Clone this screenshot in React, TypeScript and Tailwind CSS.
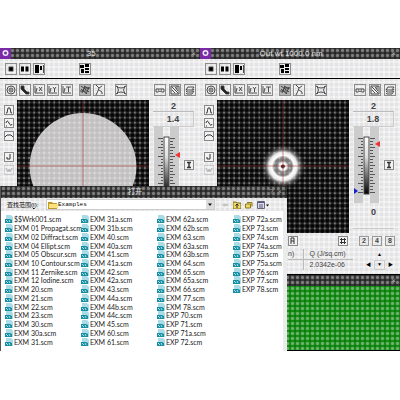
import type { ReactNode } from 'react';
import clsx from 'clsx';

const MESH =
  'bg-[radial-gradient(circle,rgba(255,255,255,0.3)_1px,transparent_2px),linear-gradient(90deg,transparent_1px,rgba(255,255,255,0.08)_1px,rgba(255,255,255,0.08)_4px,transparent_4px),linear-gradient(transparent_1px,rgba(255,255,255,0.08)_1px,rgba(255,255,255,0.08)_4px,transparent_4px)] bg-[length:5px_5px]';

const PANEL =
  'bg-[#e3e3e5] bg-[linear-gradient(90deg,transparent_3px,rgba(255,255,255,0.4)_3px),linear-gradient(transparent_3px,rgba(255,255,255,0.4)_3px)] bg-[length:5px_5px]';

const FILES = [
  [
    '$$Wrk001', 'EXM 01 Propagat', 'EXM 02 Diffract', 'EXM 04 Ellipt', 'EXM 05 Obscur',
    'EXM 10 Contour', 'EXM 11 Zernike', 'EXM 12 Iodine', 'EXM 20', 'EXM 21', 'EXM 22',
    'EXM 23', 'EXM 30', 'EXM 30a', 'EXM 31',
  ],
  [
    'EXM 31a', 'EXM 31b', 'EXM 40', 'EXM 40a', 'EXM 41', 'EXM 41a', 'EXM 42', 'EXM 42a',
    'EXM 43', 'EXM 44a', 'EXM 44b', 'EXM 44c', 'EXM 45', 'EXM 60', 'EXM 61',
  ],
  [
    'EXM 62a', 'EXM 62b', 'EXM 63', 'EXM 63a', 'EXM 63b', 'EXM 64', 'EXM 65', 'EXM 65a',
    'EXM 66', 'EXM 77', 'EXM 78', 'EXP 70', 'EXP 71', 'EXP 71a', 'EXP 72',
  ],
  ['EXP 72a', 'EXP 73', 'EXP 74', 'EXP 74a', 'EXP 75', 'EXP 75a', 'EXP 76', 'EXP 77', 'EXP 78'],
];

interface ToolProps {
  label: string;
  children: ReactNode;
  className?: string;
}

function Tool({ label, children, className }: ToolProps) {
  return (
    <button
      type="button"
      aria-label={label}
      className={clsx('size-3 shrink-0 border border-[#8c8c8c]', className)}
    >
      <svg viewBox="0 0 10 10" className="block size-full" fill="none" stroke="#3a3a3a" strokeWidth="0.900">
        {children}
      </svg>
    </button>
  );
}

function SmallTool({ label, children, className }: ToolProps) {
  return (
    <button
      type="button"
      aria-label={label}
      className={clsx('size-[10px] shrink-0 border border-[#888] bg-[#f2f2f2]', className)}
    >
      <svg viewBox="0 0 8 8" className="block size-full" fill="none" stroke="#333" strokeWidth="1">
        {children}
      </svg>
    </button>
  );
}

function TitleBar({ title, icon = true }: { title: string; icon?: boolean }) {
  return (
    <div className={clsx('flex h-[11px] items-center bg-[#262626] pr-1', MESH)}>
      {icon && (
        <svg viewBox="0 0 11 11" className="size-[11px] shrink-0">
          <rect width="11" height="11" fill="#7a2aa8" />
          <circle cx="5.500" cy="5" r="3" fill="#f2e6fa" />
          <circle cx="5.500" cy="5" r="1.500" fill="#6a3a9a" />
        </svg>
      )}
      <h2 className="flex-1 truncate pr-5 text-center text-[8px] leading-[11px] text-[#e4e4e4]">{title}</h2>
      <button type="button" aria-label="Close" className="text-[8px] leading-[11px] text-[#bbb]">
        ×
      </button>
    </div>
  );
}

function LayoutBar() {
  return (
    <div className="flex h-5 items-center gap-0.5 border-b border-black pl-[5px]">
      <Tool label="One pane">
        <rect x="3" y="3" width="4" height="4" fill="#000" />
      </Tool>
      <Tool label="Two panes">
        <path d="M1 2.500h3v5h-3zM5.500 2.500h3v5h-3z" fill="#000" stroke="none" />
      </Tool>
      <Tool label="Split pane">
        <path d="M1 1h4v8h-4zM6 2h2v4h-2z" fill="#000" stroke="none" />
        <path d="M9.500 1v8" />
      </Tool>
      <Tool label="Mosaic" className="ml-8">
        <path d="M0 1h4v3h-4zM5 0h4v3h-4zM1 5h3v4h-3zM5 4h4v2h-4zM5 7h4v2h-4z" fill="#000" stroke="none" />
      </Tool>
    </div>
  );
}

function AnalysisBar() {
  return (
    <div className="flex h-[21px] items-center gap-0.5 pt-px pl-[5px]">
      <Tool label="Target">
        <circle cx="5" cy="5" r="4" />
        <circle cx="5" cy="5" r="2" />
        <path d="M4 5h2" />
      </Tool>
      <Tool label="Phase">
        <path d="M1 1h3v3l3 3h2v2h-3l-5-5z" fill="#222" />
      </Tool>
      <Tool label="X profile">
        <path d="M1 1v7h8M2 7l1-4M5 2l3 4M8 2l-3 4" />
      </Tool>
      <Tool label="Y profile">
        <path d="M1 1v7h8M2 7l1-4M5 2l1.500 2 1.500-2M6.500 4v3" />
      </Tool>
      <Tool label="T profile">
        <path d="M1 1v7h8M2 7l1-4M4 2h5M6.500 2v5" />
      </Tool>
      <Tool label="Noise map" className="ml-1 bg-[#b4b4b4]">
        <path d="M1 1l8 6M1 4l6 5M4 1l5 3M2 8l3-7M6 9l3-7M0 6h6M4 3h6" />
      </Tool>
      <Tool label="Branches">
        <path d="M2 0l3 3-1 3-2 4M5 3l3-2M5 5l3 2v2" />
      </Tool>
      <Tool label="Beam waist" className="ml-2">
        <path d="M0 1q5 4 10 0M0 9q5-4 10 0M1 1q3 4 0 8M9 1q-3 4 0 8" />
      </Tool>
      <div className="mr-1 ml-auto flex gap-[3px]">
        <Tool label="Mask">
          <path d="M1 4h8v3h-2l-2-1-2 1h-2zM3 5h1M6 5h1" />
        </Tool>
        <Tool label="Scale">
          <path d="M1 1h8v8h-8zM2 2l6 6M5 2l3 4M2 5l3 3M7 1v3" />
        </Tool>
        <Tool label="Layers">
          <path d="M3 2h6l-2 3h-6zM1 6l1 1h5l2-3M1 8l1 1h5l2-3" />
        </Tool>
      </div>
    </div>
  );
}

function SideTools() {
  return (
    <div className="flex w-[17px] shrink-0 flex-col items-center gap-[3px] pt-[5px]">
      <SmallTool label="Gaussian">
        <path d="M1 7h1l1-5h2l1 5h1" />
      </SmallTool>
      <SmallTool label="Wave">
        <path d="M1 4q1-4 3 0t3 1M1 7h1" />
      </SmallTool>
      <SmallTool label="Dome">
        <path d="M0 5l2-2h4l2 2" />
      </SmallTool>
      <SmallTool label="Corner" className="mt-2">
        <path d="M5 1v5h-3v-2" />
      </SmallTool>
      <SmallTool label="Reset" className="opacity-30">
        <path d="M1 2l2 4 1-3 1 3 2-4" />
      </SmallTool>
    </div>
  );
}

function Plot({ id, children }: { id: string; children: ReactNode }) {
  return (
    <svg viewBox="0 0 132 132" preserveAspectRatio="xMidYMid slice" className="h-[133px] min-w-0 flex-1 bg-[#020202]">
      <defs>
        <pattern id={id} width="5" height="5" patternUnits="userSpaceOnUse">
          <path d="M0 2.500h5M2.500 0v5" stroke="#fff" strokeOpacity="0.130" strokeWidth="2" />
          <circle cx="2.500" cy="2.500" r="1" fill="#fff" fillOpacity="0.400" />
        </pattern>
        <radialGradient id={`${id}-glow`}>
          <stop offset="0" stopColor="#ddd" />
          <stop offset="0.160" stopColor="#fff" />
          <stop offset="0.260" stopColor="#777" />
          <stop offset="0.400" stopColor="#777" />
          <stop offset="0.500" stopColor="#fff" />
          <stop offset="0.640" stopColor="#e5e5e5" />
          <stop offset="0.780" stopColor="#777" stopOpacity="0.600" />
          <stop offset="1" stopColor="#222" stopOpacity="0" />
        </radialGradient>
      </defs>
      {children}
      <rect width="132" height="132" fill={`url(#${id})`} />
      <path d="M66 0v132M0 65.500h132" stroke="#a33" strokeOpacity="0.550" />
    </svg>
  );
}

interface GaugeProps {
  peak: string;
  marker: number;
  floor?: string;
}

function Gauge({ peak, marker, floor }: GaugeProps) {
  return (
    <div className="flex w-[51px] shrink-0 flex-col pr-1.5 pl-1 text-[9px] font-bold text-[#444]">
      <output className="h-[12px] border-b border-[#bbb] text-center leading-[12px]">2</output>
      <output className="h-[15px] border-r border-b border-[#ccc] text-center leading-[14px]">{peak}</output>
      <div className="flex items-center justify-between">
        <svg viewBox="0 0 28 76" className="h-[76px] w-7 shrink-0">
          <defs>
            <linearGradient id={`ramp${marker}`} x1="0" y1="0" x2="0" y2="1">
              <stop offset="0" stopColor="#fff" />
              <stop offset="0.350" stopColor="#ddd" />
              <stop offset="0.750" stopColor="#555" />
              <stop offset="1" stopColor="#000" />
            </linearGradient>
          </defs>
          <path d="M1 0h9v76h-9zM17 0h9v76h-9z" fill="#ccc" />
          {Array.from({ length: 19 }, (_, i) => (
            <path
              key={i}
              d={i % 3 === 0 ? `M5 ${11.5 + i * 3}h5M17 ${11.5 + i * 3}h5` : `M8 ${11.5 + i * 3}h2M17 ${11.5 + i * 3}h3`}
              stroke="#555"
            />
          ))}
          <rect x="11" y="10" width="5" height="57" fill={`url(#ramp${marker})`} stroke="#444" />
          <path d={`M27 ${marker - 3}v6l-5-3z`} fill="#e33" />
          <path d="M1 61v6l4-3z" fill="#12c" />
        </svg>
        <SmallTool label="Threshold">
          <path d="M2 1.500h4M2 6.500h4M4 1v6" strokeWidth="1.500" />
        </SmallTool>
      </div>
      {floor && <output className="h-[26px] border-b border-[#ccc] text-center leading-[18px]">{floor}</output>}
    </div>
  );
}

function FileName({ name }: { name: string }) {
  return (
    <button type="button" className="flex h-full items-center gap-px text-left">
      <svg viewBox="0 0 8 8" className="size-2 shrink-0">
        <path d="M1 0h5l2 2v6h-7z" fill="#a9dce6" />
        <path d="M0 4h5l2 1v3h-7z" fill="#188ea2" />
        <path d="M1 5l2 2M4 5l1 2" stroke="#d5f6fa" strokeWidth="0.800" />
      </svg>
      <span className="whitespace-nowrap">{name}.scm</span>
    </button>
  );
}

function OpenDialog() {
  return (
    <section
      role="dialog"
      aria-label="打开"
      className="absolute bottom-0 left-0 flex h-[165px] w-[287px] flex-col border-l border-[#555] bg-white"
    >
      <div className={clsx('flex h-3 items-center bg-[#262626] pr-[5px]', MESH)}>
        <h2 className="flex-1 text-center text-[7px] leading-3 text-[#e0e0e0]">打开</h2>
        <button type="button" aria-label="Help" className="mr-1 text-[8px] leading-3 text-[#999]">
          ?
        </button>
        <button type="button" aria-label="Close" className="text-[8px] leading-3 text-[#999]">
          ×
        </button>
      </div>
      <div className={clsx('flex h-[13px] items-center pl-1.5', PANEL)}>
        <label htmlFor="folder" className="w-[39px] text-[6px] leading-3 whitespace-nowrap text-black">
          查找范围(<u>I</u>):
        </label>
        <div className="flex h-[11px] w-[169px] items-center border border-[#ccc] bg-white pl-px">
          <svg viewBox="0 0 10 8" className="h-2 w-[10px] shrink-0">
            <path d="M0 1h4l1 1h4v6h-9z" fill="#c29a2c" />
            <path d="M1 3h9v4h-9z" fill="#fbe27c" />
          </svg>
          <select
            id="folder"
            className="h-[9px] flex-1 appearance-none font-['Liberation_Mono',monospace] text-[6px] leading-[9px] text-black"
          >
            <option>Examples</option>
          </select>
          <svg viewBox="0 0 8 9" className="h-[9px] w-2 shrink-0">
            <path d="M0 0h8v9h-8z" fill="#ddd" />
            <path d="M2 3.500h4l-2 2.500z" fill="#111" />
          </svg>
        </div>
        <div className="ml-[6px] flex items-center gap-1">
          <button type="button" aria-label="Back">
            <svg viewBox="0 0 8 8" className="block size-2">
              <path d="M1 4l3-2v1h3v2h-3v1z" fill="#c4c4c4" />
            </svg>
          </button>
          <button type="button" aria-label="Up one level">
            <svg viewBox="0 0 8 8" className="block size-2">
              <path d="M0 1h3l1 1h4v6h-8z" fill="#f0dc60" stroke="#77691c" />
              <path d="M4 7v-4M2.500 4.500l1.500-1.500 1.500 1.500" stroke="#222" fill="none" />
            </svg>
          </button>
          <button type="button" aria-label="New folder">
            <svg viewBox="0 0 8 8" className="block size-2">
              <path d="M.5 3h5v4h-5zM2 1.500h5v4" fill="#f0dc60" stroke="#8b7a22" />
            </svg>
          </button>
          <button type="button" aria-label="View">
            <svg viewBox="0 0 12 8" className="block h-2 w-3">
              <path d="M.5.5h7v7h-7z" fill="#dde" stroke="#667" />
              <path d="M1 1.500h6M2 4h4M2 6h4" stroke="#558" />
              <path d="M9 3.500h3l-1.500 2z" fill="#111" />
            </svg>
          </button>
        </div>
      </div>
      <div className="flex min-h-0 flex-1 border-r-4 border-[#e9eceb] pt-1 pb-[5px] pl-1">
        {FILES.map((column) => (
          <ul
            key={column[0]}
            className="grid w-[76px] shrink-0 grid-rows-[repeat(15,minmax(0,1fr))] font-['Lato',sans-serif] text-[7px] leading-[8px] text-[#222]"
          >
            {column.map((name) => (
              <li key={name}>
                <FileName name={name} />
              </li>
            ))}
          </ul>
        ))}
      </div>
    </section>
  );
}

function StatusArea() {
  return (
    <>
      <div className="flex h-[16px] items-center justify-end gap-[3px] pr-[5px]">
        <SmallTool label="Histogram" className="mr-[37px]">
          <path d="M2 7v-6h3v3h-3M5 4v3" />
        </SmallTool>
        <SmallTool label="Grid" className="mr-[8px]">
          <path d="M1 2.500h6M1 5.500h6M2.500 1v6M5.500 1v6" />
        </SmallTool>
        {['2', '4', '8'].map((zoom) => (
          <button
            key={zoom}
            type="button"
            className="h-[10px] w-[10px] border border-[#999] text-[7px] leading-[8px] font-bold text-[#444]"
          >
            {zoom}
          </button>
        ))}
      </div>
      <div className="flex h-[26px] justify-end gap-[10px] border-b border-black pr-1 pb-1">
        <table className="w-[65px] border-collapse text-[7px] leading-[10px] whitespace-nowrap text-[#444]">
          <tbody>
            <tr className="border-b border-[#bbb]">
              <th scope="col" className="w-[15px] border-r border-[#bbb] p-0 text-left font-normal">
                n)
              </th>
              <th scope="col" className="p-0 pl-1.5 text-left font-normal">
                Q (J/sq.cm)
              </th>
            </tr>
            <tr>
              <td className="border-r border-[#bbb] p-0" />
              <td className="p-0 pl-1.5">2.0342e-06</td>
            </tr>
          </tbody>
        </table>
        <div className="grid grid-cols-3 grid-rows-2 text-[5px] leading-none text-black">
          <button type="button" aria-label="Move up" className="col-start-2 w-[11px]">
            ▲
          </button>
          <button type="button" aria-label="Move left" className="row-start-2">
            ◀
          </button>
          <button type="button" aria-label="Move down" className="row-start-2 border border-[#ccc]">
            ▼
          </button>
          <button type="button" aria-label="Move right" className="row-start-2 w-[11px]">
            ▶
          </button>
        </div>
      </div>
    </>
  );
}

export default function App() {
  return (
    <div className="min-h-screen bg-white pt-12 font-['Liberation_Sans','Noto_Sans_CJK_SC',sans-serif]">
      <main className="relative grid grid-cols-2">
        <section className={clsx('min-w-0', PANEL)}>
          <TitleBar title="35" />
          <LayoutBar />
          <AnalysisBar />
          <div className="flex">
            <SideTools />
            <Plot id="input-mesh">
              <circle cx="66" cy="66" r="53" fill="#c0bebe" />
            </Plot>
            <Gauge peak="1.4" marker={28} />
          </div>
        </section>

        <div className="flex min-w-0 flex-col">
          <section className={PANEL}>
            <TitleBar title="Out wt  1000.0 nm" />
            <LayoutBar />
            <AnalysisBar />
            <div className="flex">
              <SideTools />
              <Plot id="output-mesh">
                <circle cx="66" cy="66" r="22" fill="url(#output-mesh-glow)" />
                <circle cx="66" cy="66" r="2" fill="#311" />
              </Plot>
              <Gauge peak="1.8" marker={17} floor="0" />
            </div>
            <StatusArea />
          </section>
          <section className="border-b border-black">
            <TitleBar title="" icon={false} />
            <div className={clsx('h-[64px] bg-[#078007]', MESH)} />
          </section>
        </div>

        <OpenDialog />
      </main>
    </div>
  );
}
